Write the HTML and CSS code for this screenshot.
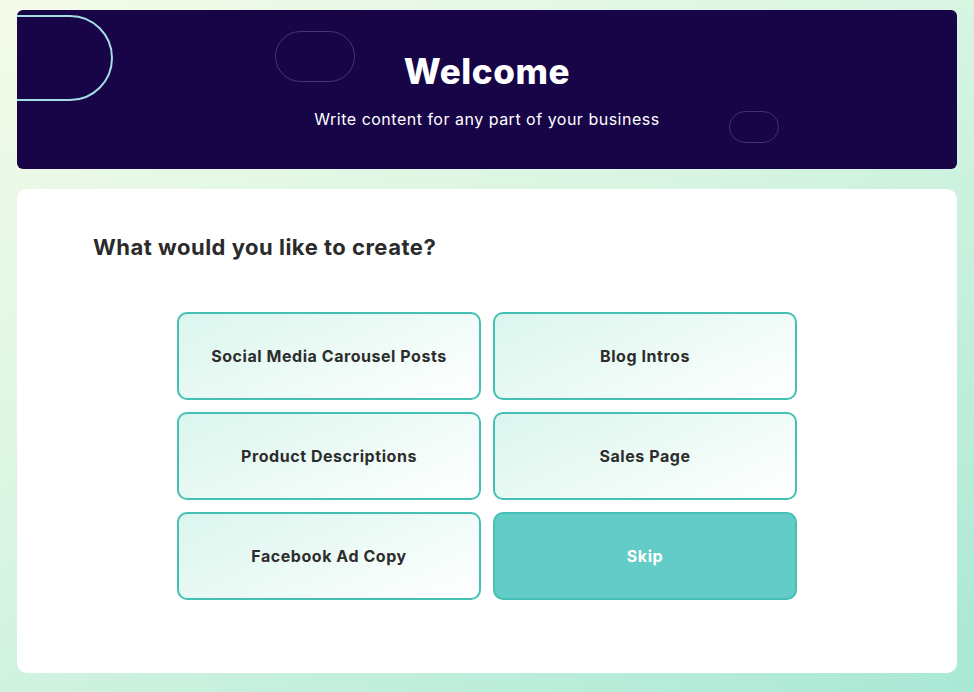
FILE: index.html
```html
<!DOCTYPE html>
<html>
<head>
<meta charset="utf-8">
<link rel="stylesheet" href="styles.css">
</head>
<body>
<div class="page">
  <header class="banner">
    <span class="pill pill-big"></span>
    <span class="pill pill-mid"></span>
    <span class="pill pill-small"></span>
    <h1 class="title">Welcome</h1>
    <p class="subtitle">Write content for any part of your business</p>
  </header>
  <main class="card">
    <h2 class="question">What would you like to create?</h2>
    <div class="options">
      <button class="option">Social Media Carousel Posts</button>
      <button class="option">Blog Intros</button>
      <button class="option">Product Descriptions</button>
      <button class="option">Sales Page</button>
      <button class="option">Facebook Ad Copy</button>
      <button class="option option-skip">Skip</button>
    </div>
  </main>
</div>
</body>
</html>
```
FILE: styles.css
```css
html, body {
  margin: 0;
  height: 100%;
}
body {
  background: linear-gradient(150deg, #f5fbea 0%, #d8f5e2 45%, #a9e8d5 100%);
  font-family: Inter, Lato, "Noto Sans", sans-serif;
}
.page {
  padding: 10px 17px 19px;
  display: flex;
  flex-direction: column;
  gap: 20px;
  height: 100%;
  box-sizing: border-box;
}
.banner {
  position: relative;
  overflow: hidden;
  height: 159px;
  flex: none;
  background: #170548;
  border-radius: 6px;
  display: flex;
  flex-direction: column;
  align-items: center;
  color: #fff;
  box-sizing: border-box;
  padding-top: 39px;
}
.pill {
  position: absolute;
  box-sizing: border-box;
}
.pill-big {
  left: -60px;
  top: 5px;
  width: 156px;
  height: 86px;
  border: 2px solid #a6dde0;
  border-radius: 43px;
}
.pill-mid {
  left: 258px;
  top: 21px;
  width: 80px;
  height: 51px;
  border: 1px solid #3f3b6c;
  border-radius: 26px;
}
.pill-small {
  left: 712px;
  top: 101px;
  width: 50px;
  height: 32px;
  border: 1px solid #3a3668;
  border-radius: 16px;
}
.title {
  margin: 0;
  font-size: 35px;
  font-weight: 800;
  line-height: 44px;
  letter-spacing: 0.6px;
  position: relative;
}
.subtitle {
  margin: 15px 0 0;
  font-size: 16px;
  line-height: 22px;
  letter-spacing: 0.5px;
  position: relative;
}
.card {
  flex: 1;
  background: #fff;
  border-radius: 10px;
  padding: 44px 76px 0;
  display: flex;
  flex-direction: column;
}
.question {
  margin: 0;
  font-size: 22px;
  font-weight: 700;
  line-height: 28px;
  letter-spacing: 0.5px;
  color: #2b2b2b;
}
.options {
  margin-top: 51px;
  align-self: center;
  display: grid;
  grid-template-columns: 304px 304px;
  grid-auto-rows: 88px;
  gap: 12px 12px;
}
.option {
  border: 2px solid #45c0b5;
  border-radius: 10px;
  background: linear-gradient(155deg, #dbf5ee 0%, #eefbf7 55%, #ffffff 100%);
  font-family: inherit;
  font-size: 16px;
  font-weight: 700;
  letter-spacing: 0.55px;
  color: #2d2d2d;
  cursor: pointer;
}
.option-skip {
  background: #64ccc6;
  color: #fff;
}
```
